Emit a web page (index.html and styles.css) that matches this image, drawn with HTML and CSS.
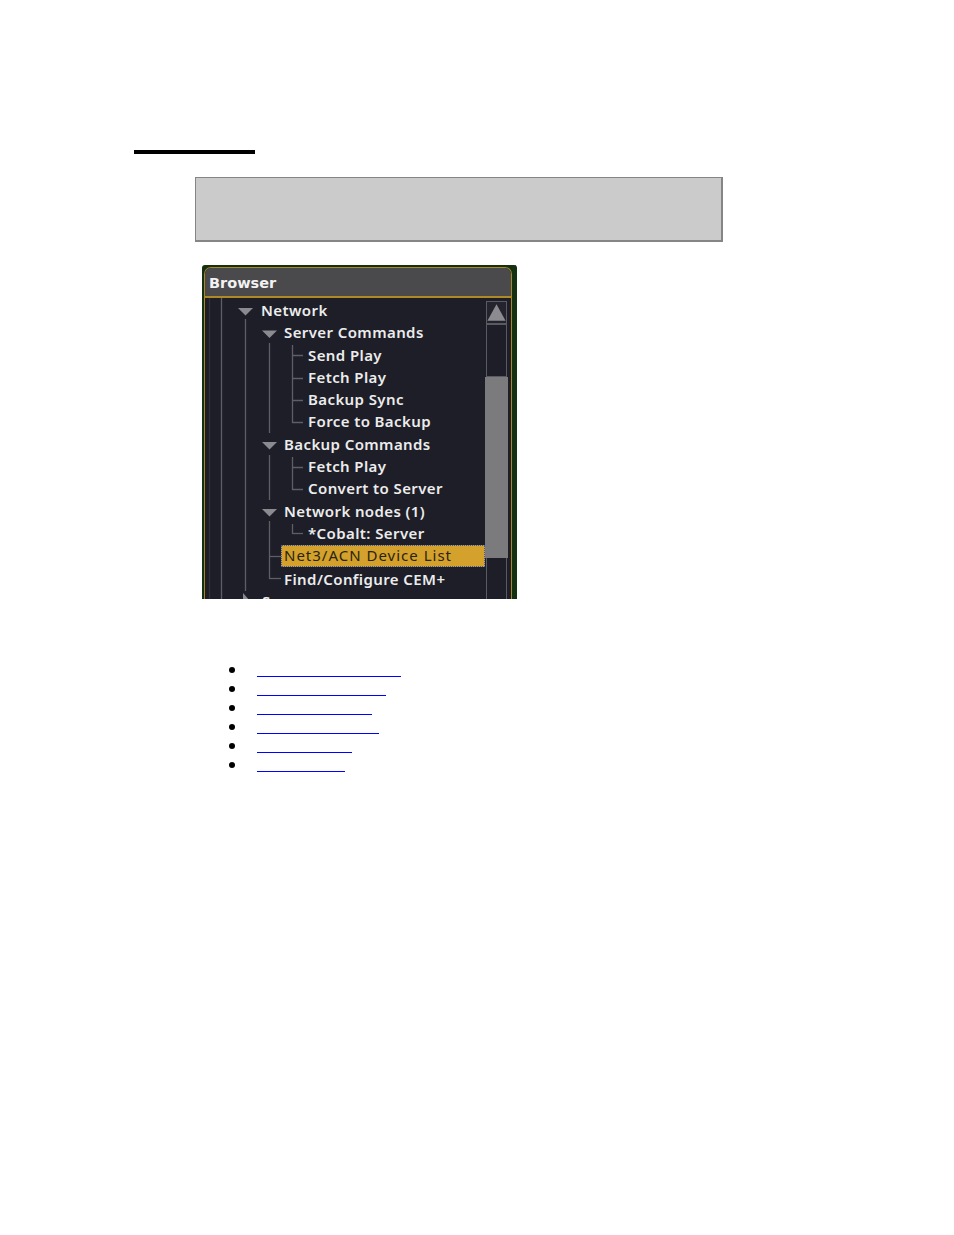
FILE: index.html
```html
<!DOCTYPE html>
<html>
<head>
<meta charset="utf-8">
<link rel="stylesheet" href="styles.css">
</head>
<body>
<div class="page">
  <div class="rule"></div>
  <div class="note"></div>
  <div class="panel">
    <div class="frame">
      <div class="header">Browser</div>
      <div class="body">
        <div class="tree">
          <svg class="lines" width="280" height="301" viewBox="0 0 280 301">
            <g stroke="#5e5f66" stroke-width="1.3" fill="none">
              <line x1="4.5" y1="0" x2="4.5" y2="301" stroke="#30313a"/>
              <line x1="16.5" y1="0" x2="16.5" y2="301"/>
              <line x1="40.5" y1="21" x2="40.5" y2="293"/>
              <line x1="64.5" y1="45" x2="64.5" y2="135"/>
              <line x1="64.5" y1="157" x2="64.5" y2="202"/>
              <line x1="64.5" y1="223" x2="64.5" y2="281"/>
              <line x1="64" y1="258.5" x2="76" y2="258.5"/>
              <line x1="64" y1="280.5" x2="76" y2="280.5"/>
              <line x1="87.5" y1="47" x2="87.5" y2="125"/>
              <line x1="87" y1="57.5" x2="98" y2="57.5"/>
              <line x1="87" y1="80.5" x2="98" y2="80.5"/>
              <line x1="87" y1="102.5" x2="98" y2="102.5"/>
              <line x1="87" y1="124.5" x2="98" y2="124.5"/>
              <line x1="87.5" y1="159" x2="87.5" y2="192"/>
              <line x1="87" y1="169.5" x2="98" y2="169.5"/>
              <line x1="87" y1="191.5" x2="98" y2="191.5"/>
              <line x1="87.5" y1="226" x2="87.5" y2="236"/>
              <line x1="87" y1="235.5" x2="98" y2="235.5"/>
            </g>
            <g fill="#8a8a90">
              <polygon points="33,10 48,10 40.5,17.5"/>
              <polygon points="57,32.5 72,32.5 64.5,40"/>
              <polygon points="57,144 72,144 64.5,151.5"/>
              <polygon points="57,211 72,211 64.5,218.5"/>
              <polygon points="38,295 38,311 45,303"/>
            </g>
          </svg>
          <div class="row l0">Network</div>
          <div class="row l1">Server Commands</div>
          <div class="row l2">Send Play</div>
          <div class="row l2">Fetch Play</div>
          <div class="row l2">Backup Sync</div>
          <div class="row l2">Force to Backup</div>
          <div class="row l1">Backup Commands</div>
          <div class="row l2">Fetch Play</div>
          <div class="row l2">Convert to Server</div>
          <div class="row l1">Network nodes (1)</div>
          <div class="row l2">*Cobalt: Server</div>
          <div class="row sel"><span class="sel-box">Net3/ACN Device List</span></div>
          <div class="row l1">Find/Configure CEM+</div>
          <div class="row l0b">Sources</div>
        </div>
        <div class="sb">
          <div class="sb-up">
            <svg width="21" height="21" viewBox="0 0 21 21"><polygon points="0.5,19.5 20.5,19.5 10.5,1.5" fill="#8c8c90"/></svg>
          </div>
          <div class="sb-thumb"></div>
          <div class="sb-track"></div>
          <div class="sb-rest"></div>
        </div>
        <div class="edge"></div>
      </div>
    </div>
  </div>
  <ul class="links">
    <li><a class="lk w1" href="#">&nbsp;</a></li>
    <li><a class="lk w2" href="#">&nbsp;</a></li>
    <li><a class="lk w3" href="#">&nbsp;</a></li>
    <li><a class="lk w4" href="#">&nbsp;</a></li>
    <li><a class="lk w5" href="#">&nbsp;</a></li>
    <li><a class="lk w6" href="#">&nbsp;</a></li>
  </ul>
</div>
</body>
</html>
```

FILE: styles.css
```css
html, body {
  margin: 0;
  padding: 0;
  background: #ffffff;
}

.page {
  padding-top: 150px;
  font-family: "Liberation Serif", serif;
}

.rule {
  margin-left: 134px;
  width: 121px;
  height: 4px;
  background: #000000;
}

.note {
  box-sizing: border-box;
  margin: 23px 0 0 195px;
  width: 528px;
  height: 65px;
  background: #cbcbcb;
  border: 1px solid #858585;
  border-right-width: 2px;
  border-bottom-width: 2px;
}

.panel {
  box-sizing: border-box;
  margin: 23px 0 0 202px;
  width: 315px;
  height: 334px;
  overflow: hidden;
  background: #14300f;
  border-left: 2px solid #14300f;
  border-top: 2px solid #14300f;
  border-right: 5px solid #14300f;
  border-radius: 3px 3px 0 0;
}

.frame {
  height: 100%;
  border: 1px solid #a8872a;
  border-bottom: none;
  border-radius: 7px 7px 0 0;
  overflow: hidden;
  background: #1d1e27;
}

.header {
  box-sizing: border-box;
  height: 30px;
  padding: 4px 0 0 4px;
  background: #4a494c;
  border-bottom: 2px solid #ad8a24;
  font-family: "DejaVu Sans", sans-serif;
  font-weight: bold;
  font-size: 14.5px;
  line-height: 22px;
  color: #f2f2f2;
}

.body {
  display: flex;
  height: 301px;
}

.tree {
  position: relative;
  width: 280px;
  padding-top: 1px;
  flex: none;
}

.lines {
  position: absolute;
  left: 0;
  top: 0;
}

.row {
  position: relative;
  height: 22.3px;
  line-height: 22.3px;
  font-family: "Noto Sans", sans-serif;
  font-weight: 600;
  font-size: 15px;
  letter-spacing: 0.4px;
  color: #ececec;
  white-space: nowrap;
}

.l0 { padding-left: 56px; }
.l0b { padding-left: 57px; }
.l1 { padding-left: 79px; }
.l2 { padding-left: 103px; }

.sel {
  padding-left: 76px;
}

.sel-box {
  display: block;
  box-sizing: border-box;
  height: 21.3px;
  line-height: 19.3px;
  margin-top: 1px;
  padding-left: 2px;
  background: #d3a12c;
  border: 1px dotted #3e5aa8;
  color: #2a2412;
  font-weight: 400;
  letter-spacing: 1px;
}

.sb {
  display: flex;
  flex-direction: column;
  width: 23px;
  flex: none;
  padding-top: 3px;
  box-sizing: border-box;
}

.sb-up {
  box-sizing: border-box;
  height: 23px;
  margin: 0 1px;
  border: 1px solid #5a5a62;
  background: #23242e;
  display: flex;
}

.sb-thumb {
  box-sizing: border-box;
  height: 53px;
  margin: 0 1px;
  border: 1px solid #5a5a62;
  background: #1d1e27;
}

.sb-track {
  height: 181px;
  background: #7b7b7e;
}

.sb-rest {
  flex: 1;
  margin: 0 1px;
  border-left: 1px solid #5a5a62;
  border-right: 1px solid #5a5a62;
}

.edge {
  width: 3px;
  flex: none;
  background: #1d1e27;
}

.links {
  list-style: none;
  margin: 65px 0 0 229px;
  padding: 0;
}

.links li {
  display: flex;
  align-items: flex-start;
  height: 19px;
}

.links li::before {
  content: "";
  width: 6px;
  height: 6px;
  margin-top: 3px;
  margin-right: 22px;
  border-radius: 50%;
  background: #000000;
  flex: none;
}

.lk {
  display: block;
  height: 12px;
  border-bottom: 1px solid #0000ff;
  color: #0000ff;
  font-size: 10px;
  line-height: 12px;
  text-decoration: none;
}

.w1 { width: 144px; }
.w2 { width: 129px; }
.w3 { width: 115px; }
.w4 { width: 122px; }
.w5 { width: 95px; }
.w6 { width: 88px; }
```
